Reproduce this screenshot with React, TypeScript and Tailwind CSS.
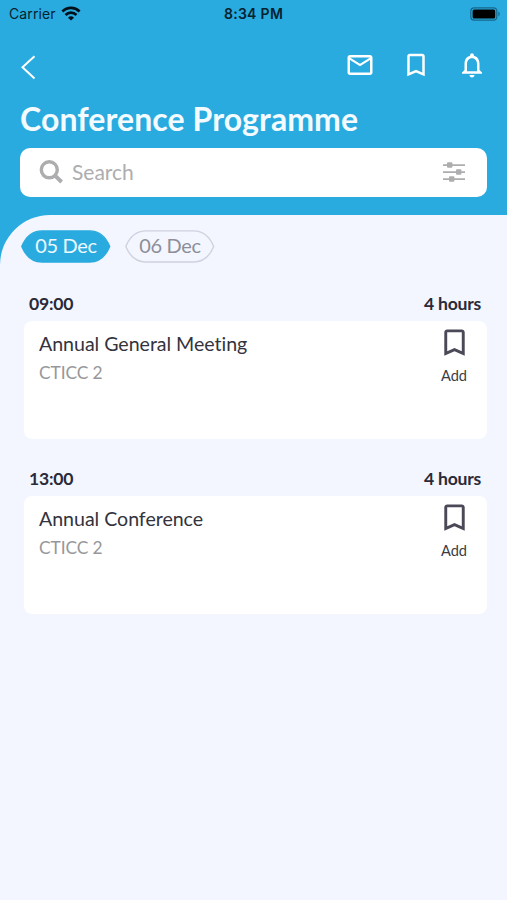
import clsx from 'clsx';
import { MdBookmarkBorder, MdMailOutline, MdNotificationsNone } from 'react-icons/md';

interface Session {
    id: number;
    time: string;
    duration: string;
    title: string;
    venue: string;
}

const days = ['05 Dec', '06 Dec'];

const sessions: Session[] = [
    { id: 1, time: '09:00', duration: '4 hours', title: 'Annual General Meeting', venue: 'CTICC 2' },
    { id: 2, time: '13:00', duration: '4 hours', title: 'Annual Conference', venue: 'CTICC 2' },
];

function StatusBar() {
    return (
        <div className="grid h-7 grid-cols-3 items-center pr-[6px] pl-[9px] font-['Inter','Liberation_Sans',sans-serif] text-[14px] leading-7 text-[#06222f]">
            <div className="flex items-center gap-[5px]">
                <span className="tracking-[0.1px]">Carrier</span>
                <svg className="-mt-[2px]" width="20" height="15" viewBox="0 0 18 14" fill="none" stroke="#001018" strokeWidth="2.6">
                    <path d="M1 5.1a11.4 11.4 0 0 1 16 0" />
                    <path d="M3.9 8.3a7.3 7.3 0 0 1 10.2 0" />
                    <path d="M9 13.6 6.2 10.9a4 4 0 0 1 5.6 0z" fill="#001018" stroke="none" />
                </svg>
            </div>
            <span className="-ml-[3px] text-center font-semibold tracking-[0.3px] whitespace-nowrap">8:34 PM</span>
            <svg className="-mt-px justify-self-end" width="31" height="14" viewBox="0 0 31 14">
                <rect x=".8" y=".8" width="26" height="12.4" rx="3.4" fill="none" stroke="#17678a" strokeWidth="1.2" />
                <rect x="2.6" y="2.4" width="22.6" height="9.2" rx="1.6" fill="#000" />
                <path d="M28.4 4.6c1.8.8 1.8 4 0 4.8z" fill="#17678a" />
            </svg>
        </div>
    );
}

function Header() {
    return (
        <header className="px-5">
            <div className="flex h-[75px] items-center justify-between">
                <svg className="mt-[3px]" width="16" height="26" viewBox="0 0 16 26" fill="none" stroke="#fff" strokeWidth="2">
                    <path d="M14.5 2.2 2.5 13.2l12 11.2" />
                </svg>
                <div className="-mt-px flex gap-[26px] text-white">
                    <MdMailOutline size={30} />
                    <MdBookmarkBorder size={30} />
                    <MdNotificationsNone size={30} />
                </div>
            </div>
            <h1 className="-mt-px h-[46px] text-[32px] leading-[34px] font-bold tracking-[0.08px] whitespace-nowrap text-[#f4fbff]">
                Conference Programme
            </h1>
            <div className="flex h-[49px] items-center rounded-[10px] bg-white pr-[21px] pl-[19px] text-[#adadb0]">
                <svg width="25" height="25" viewBox="0 0 25 25" fill="none" stroke="currentColor">
                    <circle cx="10.3" cy="9.8" r="8" strokeWidth="3.4" />
                    <path d="m15.8 15.4 6.8 6.6" strokeWidth="4" />
                </svg>
                <span className="-mt-px ml-[8px] flex-1 text-[21px]">Search</span>
                <svg className="-mt-[2px]" width="24" height="22" viewBox="0 0 24 22" fill="currentColor">
                    <path d="M1 3.2h22v1.7H1zM1 10.2h22v1.7H1zM1 17.2h22v1.7H1z" />
                    <rect x="5" y="1.3" width="5.4" height="5.4" rx="1" />
                    <rect x="14" y="8.3" width="5.4" height="5.4" rx="1" />
                    <rect x="7" y="15.3" width="5.4" height="5.4" rx="1" />
                </svg>
            </div>
        </header>
    );
}

function DayChip({ label, active }: { label: string; active: boolean }) {
    return (
        <button className="relative flex h-[33px] w-[90px] items-center justify-center">
            <svg className="absolute inset-0" width="90" height="33" viewBox="0 0 90 33">
                <path
                    d="M.8 16.5C4.5 7.5 11.5 .9 21 .9h47.500C78 .9 85 7.500 88.700 16.500 85 25.500 78 32 68.500 32H21C11.500 32 4.500 25.500 .8 16.500z"
                    fill={active ? '#29abe0' : 'none'}
                    stroke={active ? '#29abe0' : '#d0d2e0'}
                    strokeWidth="1.4"
                />
            </svg>
            <span className={clsx('relative -mt-[4px] text-[20px] leading-6 tracking-[-0.3px]', active ? 'text-[#eefaff]' : 'text-[#8d8e99]')}>
                {label}
            </span>
        </button>
    );
}

function SessionCard({ session }: { session: Session }) {
    return (
        <section className="mb-[29px]">
            <div className="flex h-[28px] justify-between pr-[6px] pl-[5px] text-[17.6px] leading-[21px] font-bold tracking-[-0.25px] text-[#2a2a38]">
                <span>{session.time}</span>
                <span>{session.duration}</span>
            </div>
            <div className="flex h-[118px] justify-between rounded-lg bg-white pr-[18px] pl-[15px]">
                <div className="pt-[11px]">
                    <h2 className="text-[19.6px] leading-6 tracking-[-0.03px] text-[#33333d]">{session.title}</h2>
                    <p className="mt-[5px] text-[17.4px] leading-6 tracking-[-0.1px] text-[#97979a]">{session.venue}</p>
                </div>
                <button className="flex w-[30px] flex-col items-center pt-[4px] text-[#4b4957]">
                    <MdBookmarkBorder size={35} className="shrink-0" />
                    <span className="mt-[6px] text-[14.6px] leading-5 text-[#3b3b45]">Add</span>
                </button>
            </div>
        </section>
    );
}

export default function App() {
    return (
        <div className="flex h-[900px] w-[507px] flex-col overflow-hidden bg-[#29abe0] font-['Lato','Liberation_Sans',sans-serif]">
            <StatusBar />
            <Header />
            <main className="mt-[18px] flex-1 rounded-tl-[50px] bg-[#f3f6ff] pt-[15px]">
                <div className="flex gap-[14px] pl-[21px]">
                    {days.map((day, i) => (
                        <DayChip key={day} label={day} active={i === 0} />
                    ))}
                </div>
                <div className="mt-[30px] pr-5 pl-6">
                    {sessions.map((session) => (
                        <SessionCard key={session.id} session={session} />
                    ))}
                </div>
            </main>
        </div>
    );
}
